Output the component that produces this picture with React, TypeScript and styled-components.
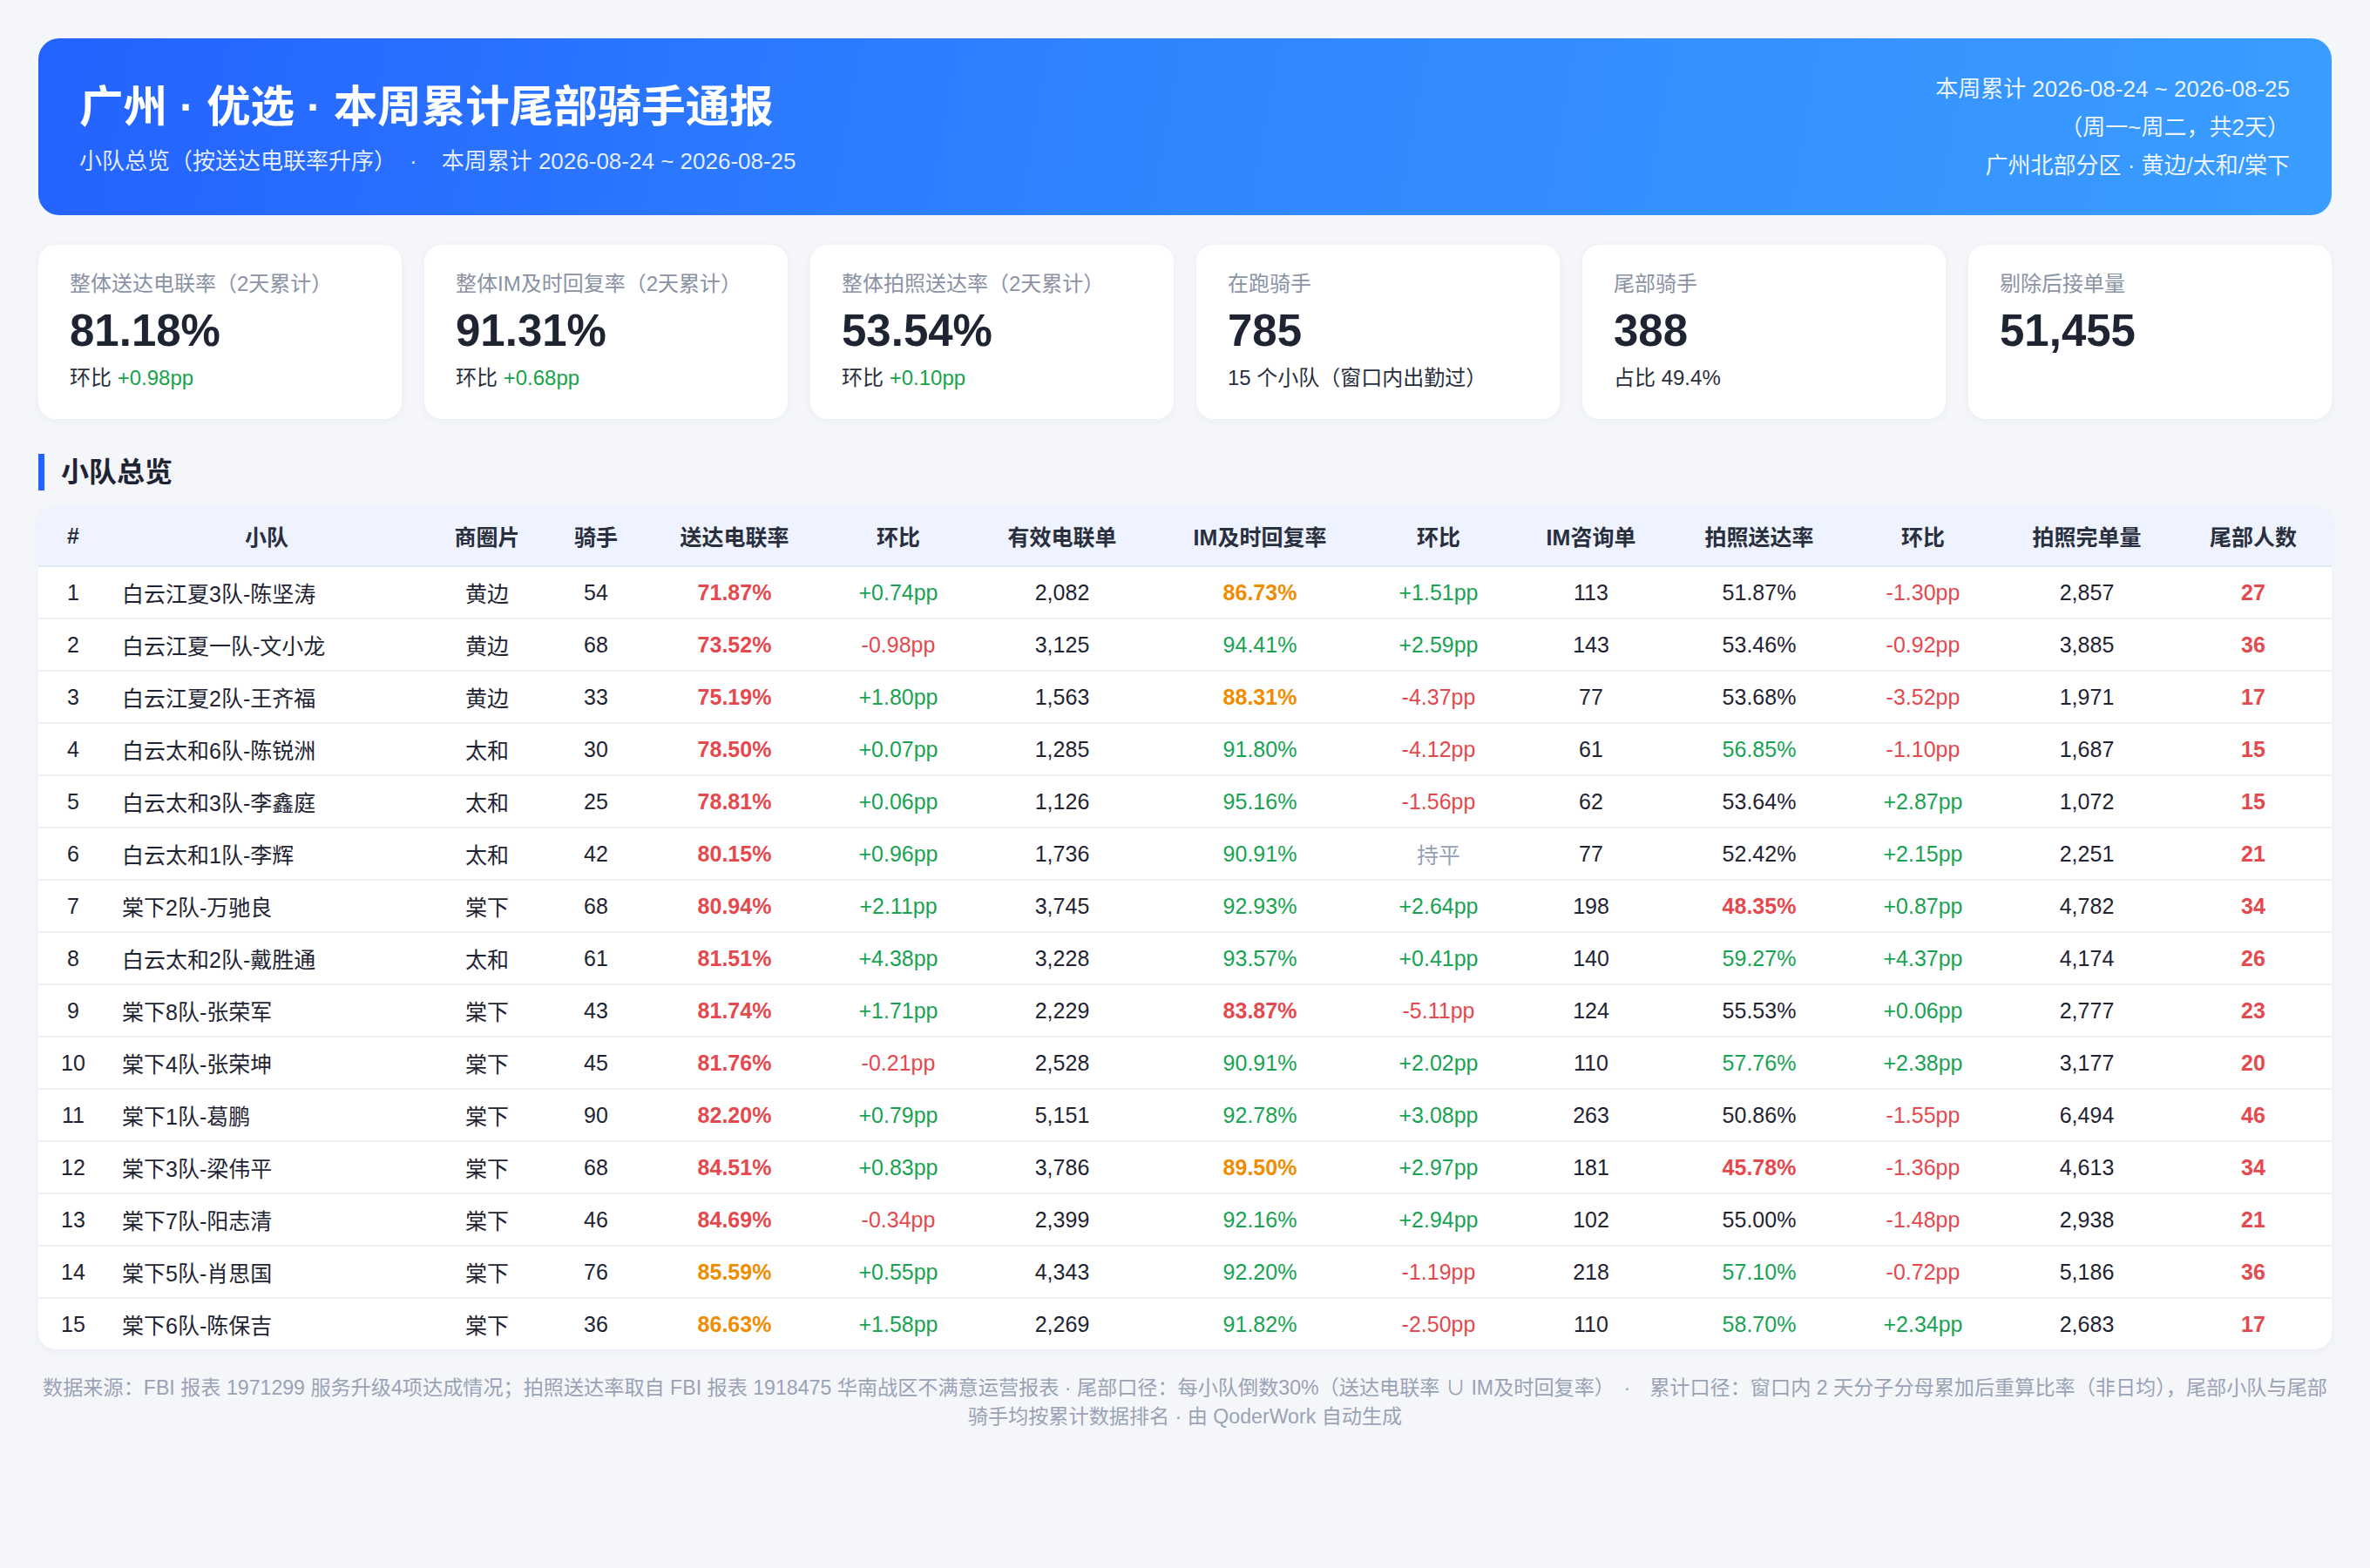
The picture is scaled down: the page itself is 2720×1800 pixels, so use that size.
import React from 'react'
import styled, { createGlobalStyle } from 'styled-components'

const GlobalStyle = createGlobalStyle`
    html, body {
        margin: 0;
        padding: 0;
        background: #f4f6fa;
    }
    body {
        font-family: "Liberation Sans", "Noto Sans CJK SC", sans-serif;
        color: #1f2433;
    }
`

const Page = styled.div`
    padding: 44px 44px 60px;
    box-sizing: border-box;
    width: 2720px;
    min-height: 1800px;
`

const Banner = styled.header`
    display: flex;
    justify-content: space-between;
    align-items: center;
    height: 203px;
    box-sizing: border-box;
    padding: 0 48px 0 47px;
    border-radius: 24px;
    background: linear-gradient(100deg, #2462ff 0%, #2f83ff 45%, #3a9dff 100%);
    color: #fff;
`

const BannerLeft = styled.div`
    display: flex;
    flex-direction: column;
    gap: 9px;
`

const Title = styled.h1`
    margin: 0;
    font-size: 50.5px;
    line-height: 70px;
    font-weight: 700;
`

const Subtitle = styled.div`
    font-size: 26px;
    line-height: 36px;
    color: rgba(255, 255, 255, 0.88);
`

const Dot = styled.span<{ $gap?: number }>`
    margin: 0 ${p => p.$gap ?? 22}px;
`

const BannerRight = styled.div`
    text-align: right;
    font-size: 26px;
    line-height: 44px;
    color: rgba(255, 255, 255, 0.92);
`

const Cards = styled.section`
    display: grid;
    grid-template-columns: repeat(6, 1fr);
    gap: 26px;
    margin-top: 34px;
`

const Card = styled.div`
    height: 200px;
    box-sizing: border-box;
    padding: 28px 36px 0;
    background: #fff;
    border-radius: 20px;
    box-shadow: 0 2px 10px rgba(30, 50, 90, 0.05);
`

const CardLabel = styled.div`
    font-size: 24px;
    line-height: 34px;
    color: #8a92a4;
`

const CardValue = styled.div`
    margin-top: 7px;
    font-size: 51px;
    line-height: 60px;
    font-weight: 700;
    color: #1f2433;
`

const CardNote = styled.div`
    margin-top: 7px;
    font-size: 24px;
    line-height: 34px;
    color: #2a2f3d;
`

const Up = styled.span`
    color: #16a34a;
`

const SectionTitle = styled.h2`
    margin: 40px 0 0;
    padding-left: 19px;
    border-left: 7px solid #2462ff;
    font-size: 32px;
    line-height: 42px;
    font-weight: 700;
    color: #1f2433;
`

const TableWrap = styled.div`
    margin-top: 18px;
    background: #fff;
    border-radius: 20px;
    overflow: hidden;
    box-shadow: 0 2px 10px rgba(30, 50, 90, 0.05);
`

const Table = styled.table`
    width: 100%;
    border-collapse: collapse;
    table-layout: fixed;
`

const HeadCell = styled.th`
    height: 68px;
    padding: 0;
    background: #eef3ff;
    border-bottom: 2px solid #dfe7f7;
    font-size: 25px;
    font-weight: 700;
    color: #2a2f3d;
    text-align: center;
`

const Row = styled.tr`
    & + & td {
        border-top: 2px solid #eef0f5;
    }
`

const Cell = styled.td<{ $left?: boolean }>`
    height: 58px;
    padding: 0 ${p => (p.$left ? '16px' : '0')};
    font-size: 25px;
    text-align: ${p => (p.$left ? 'left' : 'center')};
    color: #1f2433;
    white-space: nowrap;
`

type Tone = 'red' | 'orange' | 'green' | 'gray' | 'plain'

const toneColor: Record<Tone, string> = {
    red: '#e5484d',
    orange: '#f08c00',
    green: '#18a352',
    gray: '#94a0b4',
    plain: '#1f2433',
}

const Val = styled.span<{ $tone: Tone; $bold?: boolean }>`
    color: ${p => toneColor[p.$tone]};
    font-weight: ${p => (p.$bold ? 700 : 400)};
`

const Footer = styled.footer`
    margin-top: 28px;
    font-size: 23.15px;
    line-height: 33px;
    color: #9aa3b5;
    text-align: center;
`

const columns = [80, 364, 142, 108, 210, 166, 210, 244, 166, 184, 202, 174, 202, 180]
const headers = ['#', '小队', '商圈片', '骑手', '送达电联率', '环比', '有效电联单', 'IM及时回复率', '环比', 'IM咨询单', '拍照送达率', '环比', '拍照完单量', '尾部人数']

type TeamRow = [string, string, number, string, string, string, string, string, number, string, string, string, number]

const rows: TeamRow[] = [
    ['白云江夏3队-陈坚涛', '黄边', 54, '71.87%', '+0.74pp', '2,082', '86.73%', '+1.51pp', 113, '51.87%', '-1.30pp', '2,857', 27],
    ['白云江夏一队-文小龙', '黄边', 68, '73.52%', '-0.98pp', '3,125', '94.41%', '+2.59pp', 143, '53.46%', '-0.92pp', '3,885', 36],
    ['白云江夏2队-王齐福', '黄边', 33, '75.19%', '+1.80pp', '1,563', '88.31%', '-4.37pp', 77, '53.68%', '-3.52pp', '1,971', 17],
    ['白云太和6队-陈锐洲', '太和', 30, '78.50%', '+0.07pp', '1,285', '91.80%', '-4.12pp', 61, '56.85%', '-1.10pp', '1,687', 15],
    ['白云太和3队-李鑫庭', '太和', 25, '78.81%', '+0.06pp', '1,126', '95.16%', '-1.56pp', 62, '53.64%', '+2.87pp', '1,072', 15],
    ['白云太和1队-李辉', '太和', 42, '80.15%', '+0.96pp', '1,736', '90.91%', '持平', 77, '52.42%', '+2.15pp', '2,251', 21],
    ['棠下2队-万驰良', '棠下', 68, '80.94%', '+2.11pp', '3,745', '92.93%', '+2.64pp', 198, '48.35%', '+0.87pp', '4,782', 34],
    ['白云太和2队-戴胜通', '太和', 61, '81.51%', '+4.38pp', '3,228', '93.57%', '+0.41pp', 140, '59.27%', '+4.37pp', '4,174', 26],
    ['棠下8队-张荣军', '棠下', 43, '81.74%', '+1.71pp', '2,229', '83.87%', '-5.11pp', 124, '55.53%', '+0.06pp', '2,777', 23],
    ['棠下4队-张荣坤', '棠下', 45, '81.76%', '-0.21pp', '2,528', '90.91%', '+2.02pp', 110, '57.76%', '+2.38pp', '3,177', 20],
    ['棠下1队-葛鹏', '棠下', 90, '82.20%', '+0.79pp', '5,151', '92.78%', '+3.08pp', 263, '50.86%', '-1.55pp', '6,494', 46],
    ['棠下3队-梁伟平', '棠下', 68, '84.51%', '+0.83pp', '3,786', '89.50%', '+2.97pp', 181, '45.78%', '-1.36pp', '4,613', 34],
    ['棠下7队-阳志清', '棠下', 46, '84.69%', '-0.34pp', '2,399', '92.16%', '+2.94pp', 102, '55.00%', '-1.48pp', '2,938', 21],
    ['棠下5队-肖思国', '棠下', 76, '85.59%', '+0.55pp', '4,343', '92.20%', '-1.19pp', 218, '57.10%', '-0.72pp', '5,186', 36],
    ['棠下6队-陈保吉', '棠下', 36, '86.63%', '+1.58pp', '2,269', '91.82%', '-2.50pp', 110, '58.70%', '+2.34pp', '2,683', 17],
]

// 送达 / IM 共用阈值：<85 红，<90 橙，其余绿
const Rate: React.FC<{ v: string }> = ({ v }) => {
    const n = parseFloat(v)
    if (n < 85) return <Val $tone="red" $bold>{v}</Val>
    if (n < 90) return <Val $tone="orange" $bold>{v}</Val>
    return <Val $tone="green">{v}</Val>
}

const PhotoRate: React.FC<{ v: string }> = ({ v }) => {
    const n = parseFloat(v)
    if (n < 50) return <Val $tone="red" $bold>{v}</Val>
    if (n >= 56) return <Val $tone="green">{v}</Val>
    return <Val $tone="plain">{v}</Val>
}

const Delta: React.FC<{ v: string }> = ({ v }) => {
    const tone: Tone = v.startsWith('+') ? 'green' : v.startsWith('-') ? 'red' : 'gray'
    return <Val $tone={tone}>{v}</Val>
}

const stats = [
    { label: '整体送达电联率（2天累计）', value: '81.18%', note: <>环比 <Up>+0.98pp</Up></> },
    { label: '整体IM及时回复率（2天累计）', value: '91.31%', note: <>环比 <Up>+0.68pp</Up></> },
    { label: '整体拍照送达率（2天累计）', value: '53.54%', note: <>环比 <Up>+0.10pp</Up></> },
    { label: '在跑骑手', value: '785', note: <>15 个小队（窗口内出勤过）</> },
    { label: '尾部骑手', value: '388', note: <>占比 49.4%</> },
    { label: '剔除后接单量', value: '51,455', note: null },
]

const App: React.FC = () => {
    return (
        <Page>
            <GlobalStyle />
            <Banner>
                <BannerLeft>
                    <Title>广州 · 优选 · 本周累计尾部骑手通报</Title>
                    <Subtitle>
                        小队总览（按送达电联率升序）<Dot $gap={28}>·</Dot>本周累计 2026-08-24 ~ 2026-08-25
                    </Subtitle>
                </BannerLeft>
                <BannerRight>
                    <div>本周累计 2026-08-24 ~ 2026-08-25</div>
                    <div>（周一~周二，共2天）</div>
                    <div>广州北部分区 · 黄边/太和/棠下</div>
                </BannerRight>
            </Banner>

            <Cards>
                {stats.map(s => (
                    <Card key={s.label}>
                        <CardLabel>{s.label}</CardLabel>
                        <CardValue>{s.value}</CardValue>
                        {s.note && <CardNote>{s.note}</CardNote>}
                    </Card>
                ))}
            </Cards>

            <SectionTitle>小队总览</SectionTitle>

            <TableWrap>
                <Table>
                    <colgroup>
                        {columns.map((w, i) => <col key={i} style={{ width: w }} />)}
                    </colgroup>
                    <thead>
                        <tr>
                            {headers.map((h, i) => <HeadCell key={i}>{h}</HeadCell>)}
                        </tr>
                    </thead>
                    <tbody>
                        {rows.map((r, i) => (
                            <Row key={r[0]}>
                                <Cell>{i + 1}</Cell>
                                <Cell $left>{r[0]}</Cell>
                                <Cell>{r[1]}</Cell>
                                <Cell>{r[2]}</Cell>
                                <Cell><Rate v={r[3]} /></Cell>
                                <Cell><Delta v={r[4]} /></Cell>
                                <Cell>{r[5]}</Cell>
                                <Cell><Rate v={r[6]} /></Cell>
                                <Cell><Delta v={r[7]} /></Cell>
                                <Cell>{r[8]}</Cell>
                                <Cell><PhotoRate v={r[9]} /></Cell>
                                <Cell><Delta v={r[10]} /></Cell>
                                <Cell>{r[11]}</Cell>
                                <Cell><Val $tone="red" $bold>{r[12]}</Val></Cell>
                            </Row>
                        ))}
                    </tbody>
                </Table>
            </TableWrap>

            <Footer>
                数据来源：FBI 报表 1971299 服务升级4项达成情况；拍照送达率取自 FBI 报表 1918475 华南战区不满意运营报表 · 尾部口径：每小队倒数30%（送达电联率 ∪ IM及时回复率）<Dot>·</Dot>累计口径：窗口内 2 天分子分母累加后重算比率（非日均），尾部小队与尾部骑手均按累计数据排名 · 由 QoderWork 自动生成
            </Footer>
        </Page>
    )
}

export default App
